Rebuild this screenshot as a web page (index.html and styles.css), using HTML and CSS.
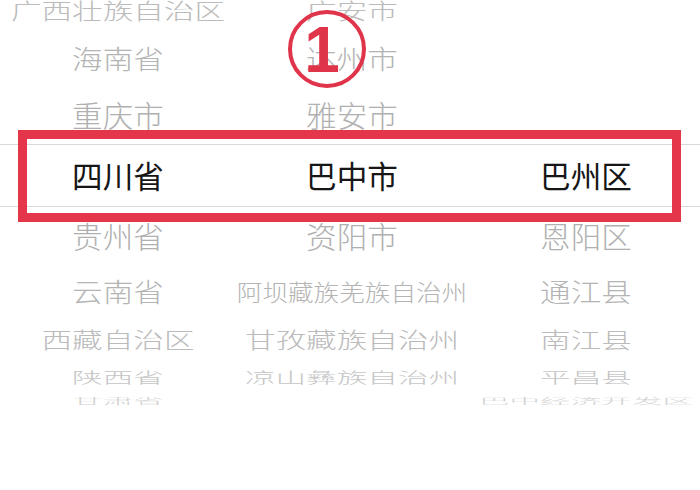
FILE: index.html
```html
<!DOCTYPE html>
<html lang="zh-CN">
<head>
<meta charset="utf-8">
<title>地区选择</title>
<link rel="stylesheet" href="styles.css">
</head>
<body>
<div class="picker">
  <div class="wheels">
    <div class="col">
      <div class="slot s3"><span>广西壮族自治区</span></div>
      <div class="slot s2"><span>海南省</span></div>
      <div class="slot s1"><span>重庆市</span></div>
      <div class="slot s0"><span>四川省</span></div>
      <div class="slot s1"><span>贵州省</span></div>
      <div class="slot s2"><span>云南省</span></div>
      <div class="slot s3"><span>西藏自治区</span></div>
      <div class="slot s4"><span>陕西省</span></div>
      <div class="slot s5"><span>甘肃省</span></div>
    </div>
    <div class="col">
      <div class="slot s3"><span>广安市</span></div>
      <div class="slot s2"><span>达州市</span></div>
      <div class="slot s1"><span>雅安市</span></div>
      <div class="slot s0"><span>巴中市</span></div>
      <div class="slot s1"><span>资阳市</span></div>
      <div class="slot s2"><span class="long">阿坝藏族羌族自治州</span></div>
      <div class="slot s3"><span>甘孜藏族自治州</span></div>
      <div class="slot s4"><span>凉山彝族自治州</span></div>
      <div class="slot s5"></div>
    </div>
    <div class="col">
      <div class="slot s3"></div>
      <div class="slot s2"></div>
      <div class="slot s1"></div>
      <div class="slot s0"><span>巴州区</span></div>
      <div class="slot s1"><span>恩阳区</span></div>
      <div class="slot s2"><span>通江县</span></div>
      <div class="slot s3"><span>南江县</span></div>
      <div class="slot s4"><span>平昌县</span></div>
      <div class="slot s5"><span>巴中经济开发区</span></div>
    </div>
  </div>
  <div class="band"></div>
  <div class="mark"></div>
  <svg class="badge" width="80" height="80" viewBox="0 0 80 80">
    <circle cx="40" cy="40" r="37" fill="none" stroke="#e0344a" stroke-width="4"/>
    <text x="35" y="63" text-anchor="middle" class="badge-num">1</text>
  </svg>
</div>
</body>
</html>
```
FILE: styles.css
```css
html, body {
  margin: 0;
  padding: 0;
  background: #ffffff;
}
body {
  width: 700px;
  height: 490px;
  overflow: hidden;
  font-family: "Noto Sans CJK SC", "Noto Sans", sans-serif;
}
.picker {
  position: relative;
  width: 700px;
  height: 490px;
  overflow: hidden;
  background: #ffffff;
}
.wheels {
  display: grid;
  grid-template-columns: repeat(3, 234px);
  margin-top: -11.4px;
  margin-left: 1px;
}
.col {
  display: flex;
  flex-direction: column;
}
.slot {
  display: flex;
  align-items: center;
  justify-content: center;
  white-space: nowrap;
  font-size: 30.6px;
  font-weight: 300;
  line-height: 1;
  color: #b4b4b4;
}
.slot span {
  display: block;
}
.slot .long {
  font-size: 25.6px;
}
.s0 { height: 61.35px; color: #161616; font-weight: 400; }
.s1 { height: 59.26px; color: #b0b0b0; }
.s1 span { transform: scaleY(0.966); }
.s2 { height: 53.13px; color: #b4b4b4; }
.s2 span { transform: scaleY(0.866); }
.s3 { height: 43.38px; color: #bbbbbb; }
.s3 span { transform: scaleY(0.707); }
.s4 { height: 30.67px; color: #c6c6c6; }
.s4 span { transform: scaleY(0.5); }
.s5 { height: 15.88px; color: #d2d2d2; }
.s5 span { transform: scaleY(0.259); }

.band {
  position: absolute;
  left: 0;
  top: 144px;
  width: 700px;
  height: 61px;
  border-top: 1px solid #d9d9d9;
  border-bottom: 1px solid #d9d9d9;
}
.mark {
  position: absolute;
  left: 18px;
  top: 130px;
  width: 645px;
  height: 74px;
  border: 9px solid #e5354b;
}
.badge {
  position: absolute;
  left: 287px;
  top: 9px;
}
.badge-num {
  font-family: "Liberation Sans", Arial, sans-serif;
  font-weight: bold;
  font-size: 64px;
  fill: #e0344a;
}
```
